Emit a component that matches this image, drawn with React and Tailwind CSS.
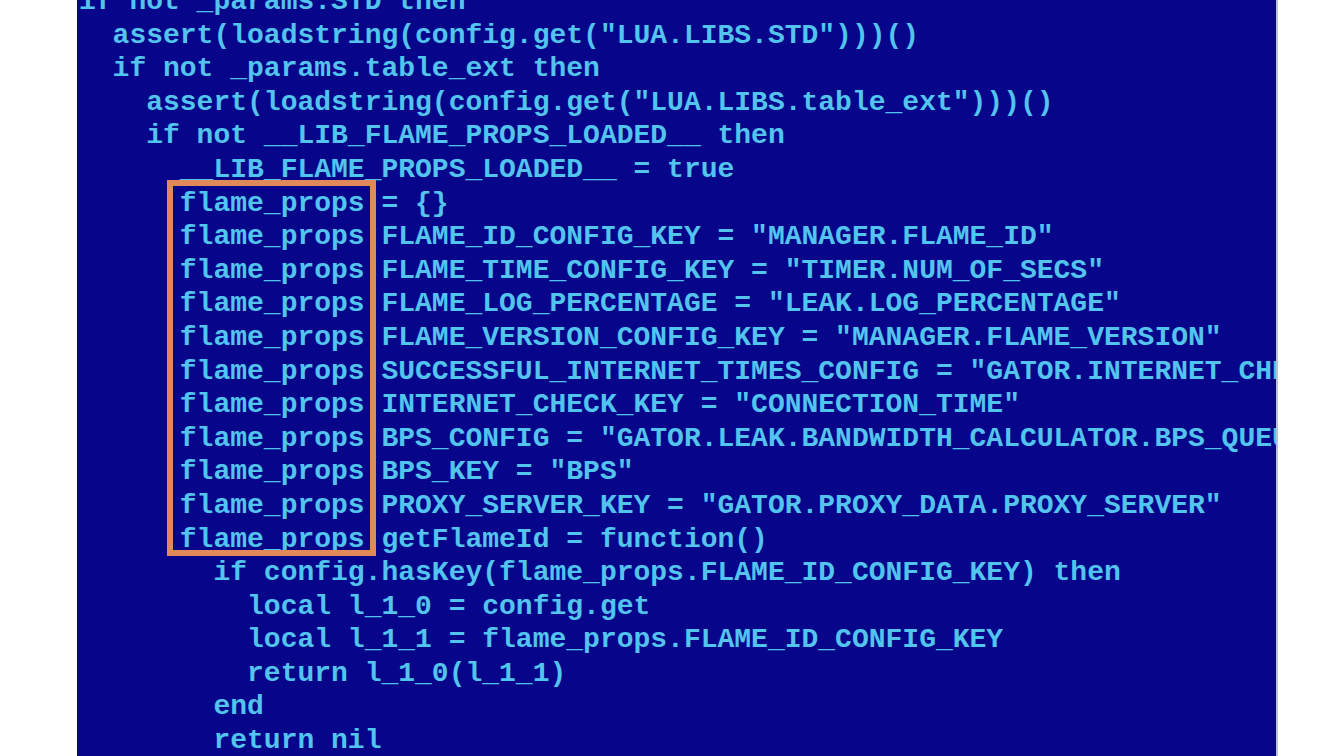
import React from 'react';

const before = [
  'if not _params.STD then',
  '  assert(loadstring(config.get("LUA.LIBS.STD")))()',
  '  if not _params.table_ext then',
  '    assert(loadstring(config.get("LUA.LIBS.table_ext")))()',
  '    if not __LIB_FLAME_PROPS_LOADED__ then',
  '      __LIB_FLAME_PROPS_LOADED__ = true',
];

// the rest of each flame_props line, after the highlighted name
const props = [
  ' = {}',
  '.FLAME_ID_CONFIG_KEY = "MANAGER.FLAME_ID"',
  '.FLAME_TIME_CONFIG_KEY = "TIMER.NUM_OF_SECS"',
  '.FLAME_LOG_PERCENTAGE = "LEAK.LOG_PERCENTAGE"',
  '.FLAME_VERSION_CONFIG_KEY = "MANAGER.FLAME_VERSION"',
  '.SUCCESSFUL_INTERNET_TIMES_CONFIG = "GATOR.INTERNET_CHECK_SUCCESSFUL_TIMES"',
  '.INTERNET_CHECK_KEY = "CONNECTION_TIME"',
  '.BPS_CONFIG = "GATOR.LEAK.BANDWIDTH_CALCULATOR.BPS_QUEUE"',
  '.BPS_KEY = "BPS"',
  '.PROXY_SERVER_KEY = "GATOR.PROXY_DATA.PROXY_SERVER"',
  '.getFlameId = function()',
];

const after = [
  '        if config.hasKey(flame_props.FLAME_ID_CONFIG_KEY) then',
  '          local l_1_0 = config.get',
  '          local l_1_1 = flame_props.FLAME_ID_CONFIG_KEY',
  '          return l_1_0(l_1_1)',
  '        end',
  '        return nil',
];

const Line = ({ children }) => (
  <div className="h-[33.6px] leading-[33.6px] whitespace-pre">{children}</div>
);

export default function App() {
  return (
    <div className="w-full h-[756px] bg-white flex overflow-hidden">
      <div className="ml-[77px] w-[1201px] h-full bg-[#07068a] overflow-hidden border-r-2 border-[#b9bde8]">
        <div
          className="mt-[-15px] pl-[2px] text-[28px] font-bold text-[#52c4ee]"
          style={{ fontFamily: '"Liberation Mono", "DejaVu Sans Mono", monospace' }}
        >
          {before.map((l, i) => <Line key={i}>{l}</Line>)}

          <div className="relative">
            {props.map((rest, i) => (
              <Line key={i}>{'      flame_props' + rest}</Line>
            ))}
            {/* highlight around the flame_props column */}
            <div className="absolute left-[88px] top-[-7px] w-[209px] h-[376px] border-[6px] border-[#e2895c]" />
          </div>

          {after.map((l, i) => <Line key={i}>{l}</Line>)}
        </div>
      </div>
    </div>
  );
}
